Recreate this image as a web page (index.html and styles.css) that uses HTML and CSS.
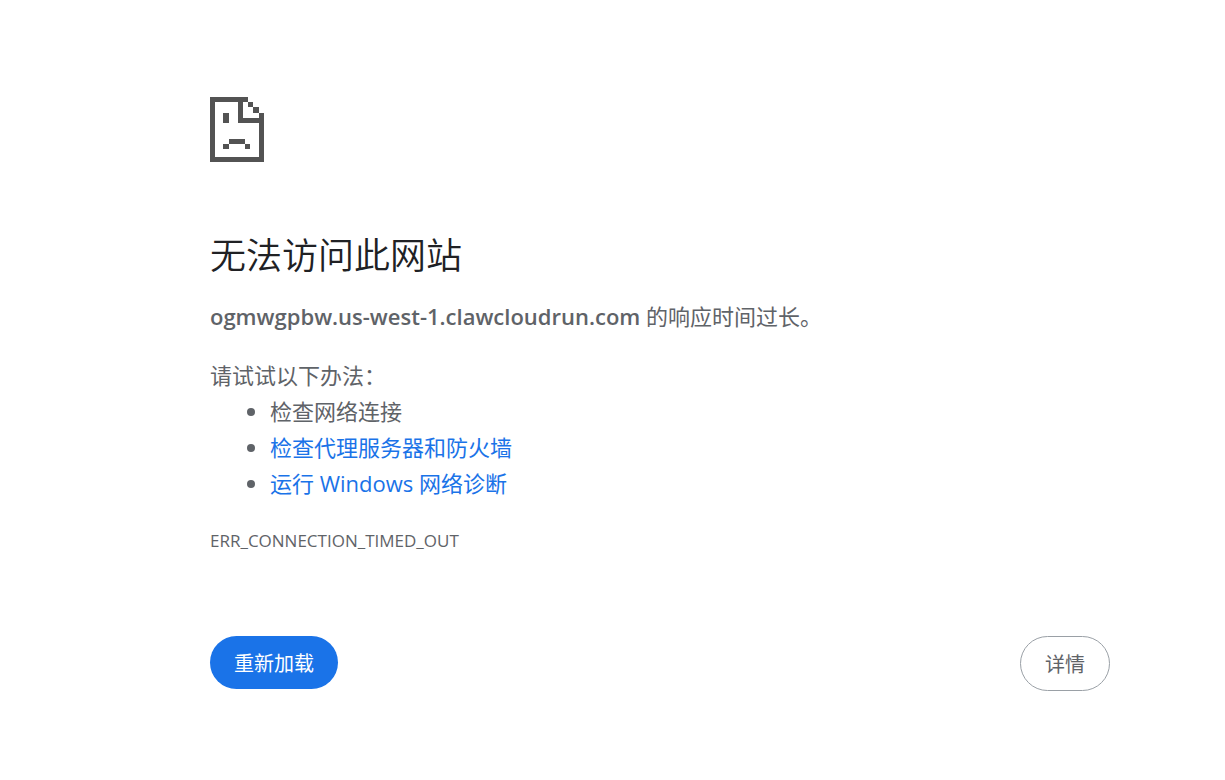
FILE: index.html
```html
<!DOCTYPE html>
<html lang="zh-CN">
<head>
<meta charset="utf-8">
<meta name="viewport" content="width=device-width, initial-scale=1">
<title>ogmwgpbw.us-west-1.clawcloudrun.com</title>
<link rel="stylesheet" href="styles.css">
</head>
<body>
<main class="error-page">
  <svg class="error-icon" viewBox="0 0 54 65" aria-hidden="true" shape-rendering="crispEdges">
    <path d="M0 0H38V5H33V21H49V16H54V65H0ZM5 5V60H49V26H28V5Z" fill-rule="evenodd"/>
    <path d="M38 5h5v5h-5zM43 10h6v6h-6zM13 16h6v10h-6zM19 42h16v5h-16zM13 47h6v5h-6zM35 47h5v5h-5z"/>
  </svg>
  <h1 class="title">无法访问此网站</h1>
  <p class="summary"><strong>ogmwgpbw.us-west-1.clawcloudrun.com</strong> 的响应时间过长。</p>
  <div class="suggestions">
    <p class="suggestions-label">请试试以下办法：</p>
    <ul class="suggestions-list">
      <li>检查网络连接</li>
      <li><a class="link" href="#proxy">检查代理服务器和防火墙</a></li>
      <li><a class="link" href="#diagnose">运行 Windows 网络诊断</a></li>
    </ul>
  </div>
  <p class="error-code">ERR_CONNECTION_TIMED_OUT</p>
  <div class="actions">
    <button class="button button-primary" type="button">重新加载</button>
    <button class="button button-secondary" type="button">详情</button>
  </div>
</main>
</body>
</html>
```
FILE: styles.css
```css
* {
  box-sizing: border-box;
}

body {
  margin: 0;
  background: #fff;
  color: #5f6368;
  font-family: "Open Sans", "Noto Sans CJK SC", sans-serif;
  font-size: 22px;
  line-height: 36px;
}

.error-page {
  max-width: 900px;
  margin: 0 115px 0 210px;
  padding-top: 97px;
}

.error-icon {
  display: block;
  width: 54px;
  height: 65px;
  fill: #535353;
}

.title {
  margin: 72px 0 0;
  color: #202124;
  font-size: 36px;
  font-weight: 350;
  line-height: 44px;
}

.summary {
  margin: 20px 0 0;
}

.summary strong {
  font-weight: 600;
}

.suggestions {
  margin-top: 23px;
}

.suggestions-label {
  margin: 0;
}

.suggestions-list {
  margin: 0;
  padding-left: 60px;
}

.link {
  color: #1a73e8;
  text-decoration: none;
}

.error-code {
  margin: 24px 0 0;
  font-size: 17px;
  line-height: 32px;
}

.actions {
  display: flex;
  justify-content: space-between;
  align-items: flex-start;
  margin-top: 79px;
}

.button {
  padding: 13px 24px 11px;
  border: 0;
  border-radius: 28px;
  font-family: inherit;
  font-size: 20px;
  line-height: 29px;
  cursor: pointer;
}

.button-primary {
  background: #1a73e8;
  color: #fff;
}

.button-secondary {
  border: 1px solid #9aa0a6;
  background: #fff;
  color: #5f6368;
}
```
